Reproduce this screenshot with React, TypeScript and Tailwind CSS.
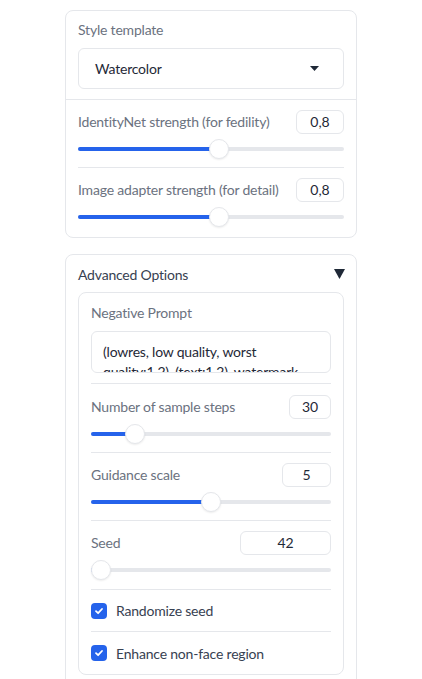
import React from 'react'

const font = { fontFamily: 'Lato, "Noto Sans", sans-serif' }

function NumBox({ value, w }: { value: string, w: string }) {
  return <div className={`${w} h-[24px] border border-[#e5e7eb] rounded-md flex items-center justify-center text-[14px] text-[#1f2937] leading-none`}>{value}</div>
}

function Slider({ pct }: { pct: number }) {
  // pct: thumb position (0..1) along the usable track
  return <div className="relative h-[20px]">
    <div className="absolute left-0 right-0 top-[8px] h-[4px] rounded-full bg-[#e5e7eb]" />
    <div className="absolute left-0 top-[8px] h-[4px] rounded-full bg-[#2563eb]"
      style={{ width: `calc(10px + (100% - 20px) * ${pct})` }} />
    <div className="absolute top-0 w-[20px] h-[20px] rounded-full bg-white border border-[#e5e7eb] shadow-[0_1px_2px_rgba(0,0,0,0.08)]"
      style={{ left: `calc((100% - 20px) * ${pct})` }} />
  </div>
}

function SliderRow({ label, value, w, pct, pt = 'pt-[10px]', pb = 'pb-[8px]', last }: { label: string, value: string, w: string, pct: number, pt?: string, pb?: string, last?: boolean }) {
  return <div className={`${pt} ${pb} ${last ? '' : 'border-b border-[#e5e7eb]'}`}>
    <div className="flex items-center justify-between">
      <span className="text-[14px] tracking-[-0.2px] leading-[20px] text-[#6b7280] whitespace-nowrap">{label}</span>
      <NumBox value={value} w={w} />
    </div>
    <div className="mt-[5px]">
      <Slider pct={pct} />
    </div>
  </div>
}

function Check({ label, last }: { label: string, last?: boolean }) {
  return <div className={`h-[42px] flex items-center gap-[9px] ${last ? '' : 'border-b border-[#e5e7eb]'}`}>
    <div className="w-[16px] h-[16px] rounded-[4px] bg-[#2563eb] flex items-center justify-center">
      <svg width="10" height="10" viewBox="0 0 10 10"><path d="M2 5.2 L4.1 7.2 L8 3" stroke="white" strokeWidth="1.8" fill="none" strokeLinecap="round" strokeLinejoin="round" /></svg>
    </div>
    <span className="text-[14px] tracking-[-0.2px] text-[#374151]">{label}</span>
  </div>
}

const negPrompt = '(lowres, low quality, worst quality:1.2), (text:1.2), watermark, (frame:1.2), deformed, ugly, deformed eyes, blur, out of focus, blurry'

export default function App() {
  return (
    <div className="min-h-[679px] bg-white pt-[10px]" style={font}>
      <div className="ml-[65px] w-[292px] border border-[#e5e7eb] rounded-lg">
        <div className="px-[12px] pt-[9px] pb-[10px] border-b border-[#e5e7eb]">
          <div className="text-[14px] tracking-[-0.2px] leading-[20px] text-[#6b7280]">Style template</div>
          <div className="mt-[8px] h-[41px] border border-[#e5e7eb] rounded-md flex items-center justify-between pl-[16px] pr-[24px]">
            <span className="text-[14px] tracking-[-0.2px] text-[#1f2937]">Watercolor</span>
            <svg width="9" height="5" viewBox="0 0 9 5"><path d="M0 0 H9 L4.5 5 Z" fill="#1f2937" /></svg>
          </div>
        </div>
        <div className="px-[12px]">
          <SliderRow label="IdentityNet strength (for fedility)" value="0,8" w="w-[48px]" pct={0.532} />
          <SliderRow label="Image adapter strength (for detail)" value="0,8" w="w-[48px]" pct={0.532} pb="pb-[10px]" last />
        </div>
      </div>

      <div className="ml-[65px] mt-[16px] w-[292px] border border-[#e5e7eb] rounded-lg px-[12px] pt-[9px] pb-[16px]">
        <div className="flex items-center justify-between h-[20px]">
          <span className="text-[14px] tracking-[-0.2px] text-[#374151]">Advanced Options</span>
          <svg width="11" height="10" viewBox="0 0 11 10" className="mr-[-1px]"><path d="M0 0 H11 L5.5 10 Z" fill="#1f2937" /></svg>
        </div>
        <div className="mt-[8px] border border-[#e5e7eb] rounded-lg px-[12px]">
          <div className="pt-[10px] pb-[10px] border-b border-[#e5e7eb]">
            <div className="text-[14px] tracking-[-0.2px] leading-[20px] text-[#6b7280]">Negative Prompt</div>
            <textarea readOnly value={negPrompt}
              className="block mt-[8px] w-full h-[42px] border border-[#e5e7eb] rounded-md overflow-hidden resize-none outline-none px-[11px] pt-[10px] text-[14px] tracking-[-0.2px] leading-[20px] text-[#1f2937]"
              style={font} />
          </div>
          <SliderRow label="Number of sample steps" value="30" w="w-[42px]" pct={0.154} pt="pt-[11px]" />
          <SliderRow label="Guidance scale" value="5" w="w-[49px]" pct={0.5} />
          <SliderRow label="Seed" value="42" w="w-[91px]" pct={0} pb="pb-[9px]" />
          <Check label="Randomize seed" />
          <Check label="Enhance non-face region" last />
        </div>
      </div>
    </div>
  )
}
